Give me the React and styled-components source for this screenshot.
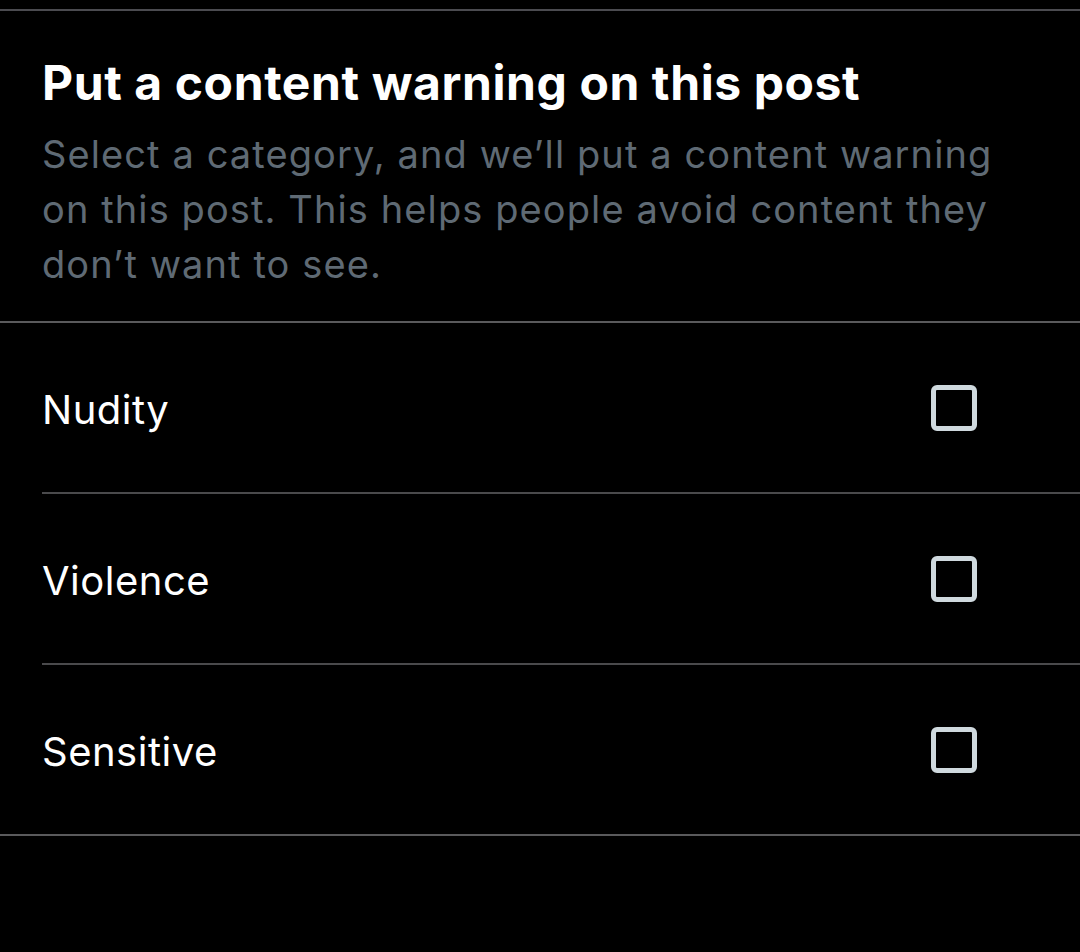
import React, { useState } from "react";
import styled, { createGlobalStyle } from "styled-components";

const GlobalStyle = createGlobalStyle`
  html, body {
    margin: 0;
    padding: 0;
    background: #000;
  }
  body {
    font-family: Inter, "Noto Sans", "Liberation Sans", sans-serif;
    color: #e7e9ea;
  }
`;

const Page = styled.div`
  width: 1080px;
  height: 952px;
  background: #000;
  padding-top: 9px;
  box-sizing: border-box;
`;

const Sheet = styled.div`
  border-top: 2px solid #4b4b50;
  border-bottom: 2px solid #5a5a5c;
`;

const Header = styled.div`
  padding: 44px 42px 29px 42px;
  border-bottom: 2px solid #5a5a5c;
`;

const Title = styled.h1`
  margin: 0;
  font-size: 48px;
  line-height: 56px;
  font-weight: 700;
  color: #ffffff;
  letter-spacing: 0.6px;
`;

const Desc = styled.p`
  margin: 16px 0 0 0;
  font-size: 38px;
  line-height: 55px;
  font-weight: 400;
  color: #5f6a74;
  letter-spacing: 1.1px;
`;

const List = styled.div`
  display: flex;
  flex-direction: column;
`;

const Row = styled.label`
  display: flex;
  align-items: center;
  justify-content: space-between;
  height: 169px;
  margin-left: 42px;
  padding-right: 103px;
  border-top: ${(p) => (p.first ? "none" : "2px solid #4a4a4c")};
  cursor: pointer;
`;

const Label = styled.span`
  font-size: 40px;
  color: #ffffff;
  font-weight: 400;
  letter-spacing: 0.5px;
  padding-top: 4px;
`;

const Box = styled.span`
  width: 46px;
  height: 46px;
  box-sizing: border-box;
  border: 5px solid #cfd9de;
  border-radius: 6px;
  background: ${(p) => (p.checked ? "#cfd9de" : "transparent")};
`;

const items = ["Nudity", "Violence", "Sensitive"];

export default function App() {
  const [checked, setChecked] = useState({});

  return (
    <>
      <GlobalStyle />
      <Page>
        <Sheet>
          <Header>
            <Title>Put a content warning on this post</Title>
            <Desc>
              Select a category, and we’ll put a content warning on this post.
              This helps people avoid content they don’t want to see.
            </Desc>
          </Header>
          <List>
            {items.map((name, i) => (
              <Row
                key={name}
                first={i === 0}
                onClick={() => setChecked({ ...checked, [name]: !checked[name] })}
              >
                <Label>{name}</Label>
                <Box checked={checked[name]} />
              </Row>
            ))}
          </List>
        </Sheet>
      </Page>
    </>
  );
}
